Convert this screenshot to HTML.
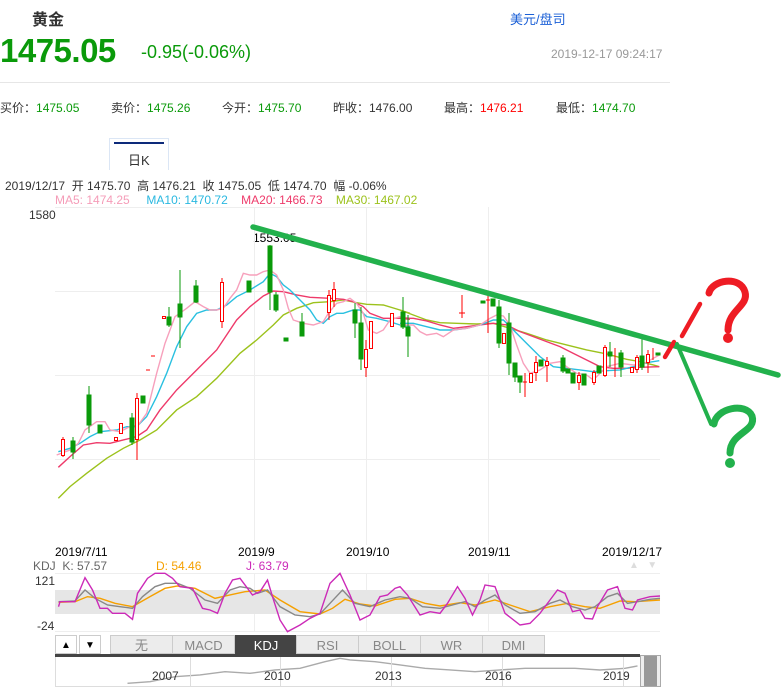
<!DOCTYPE html>
<html><head><meta charset="utf-8"><style>
body{margin:0;width:782px;height:689px;background:#fff;font-family:"Liberation Sans","Noto Sans CJK SC",sans-serif;position:relative;overflow:hidden}
.a{position:absolute;white-space:nowrap}
.g{color:#0a9a0a}.r{color:#f00}
.tab{position:absolute;top:635px;height:19px;border:1px solid #ccc;background:#ececec;color:#888;font-size:13px;text-align:center;line-height:19px;box-sizing:border-box}
</style></head><body>
<div class="a" style="left:32px;top:6px;font-size:16px;font-weight:bold;color:#333">黄金</div>
<div class="a" style="left:510px;top:9px;font-size:13px;color:#1a5fd6">美元/盘司</div>
<div class="a g" style="left:0;top:32px;font-size:33px;font-weight:bold;letter-spacing:-0.5px">1475.05</div>
<div class="a g" style="left:141px;top:42px;font-size:18px">-0.95(-0.06%)</div>
<div class="a" style="left:551px;top:47px;font-size:12px;color:#999">2019-12-17 09:24:17</div>
<div class="a" style="left:0;top:82px;width:670px;height:1px;background:#e6e6e6"></div>
<div class="a" style="left:0;top:99px;font-size:12px;color:#333">买价：<span class="g">1475.05</span></div>
<div class="a" style="left:111px;top:99px;font-size:12px;color:#333">卖价：<span class="g">1475.26</span></div>
<div class="a" style="left:222px;top:99px;font-size:12px;color:#333">今开：<span class="g">1475.70</span></div>
<div class="a" style="left:333px;top:99px;font-size:12px;color:#333">昨收：1476.00</div>
<div class="a" style="left:444px;top:99px;font-size:12px;color:#333">最高：<span class="r">1476.21</span></div>
<div class="a" style="left:556px;top:99px;font-size:12px;color:#333">最低：<span class="g">1474.70</span></div>
<div class="a" style="left:109px;top:138px;width:60px;height:32px;border:1px solid #dbe6f5;border-bottom:none;box-sizing:border-box;background:#fff"></div>
<div class="a" style="left:114px;top:142px;width:50px;height:2px;background:#0d2a7a"></div>
<div class="a" style="left:128px;top:150px;font-size:13px;color:#333">日K</div>
<div class="a" style="left:5px;top:177px;font-size:12px;color:#333">2019/12/17&nbsp; 开 1475.70&nbsp; 高 1476.21&nbsp; 收 1475.05&nbsp; 低 1474.70&nbsp; 幅 -0.06%</div>
<div class="a" style="left:55px;top:193px;font-size:12px"><span style="color:#f59cb8">MA5: 1474.25</span>&nbsp;&nbsp;&nbsp;&nbsp; <span style="color:#2ab8e0">MA10: 1470.72</span>&nbsp;&nbsp;&nbsp; <span style="color:#ee3a6a">MA20: 1466.73</span>&nbsp;&nbsp;&nbsp; <span style="color:#9cc21c">MA30: 1467.02</span></div>
<div class="a" style="left:29px;top:208px;font-size:12px;color:#333">1580</div>
<div class="a" style="left:253px;top:231px;font-size:12px;color:#000">1553.05</div>
<div class="a" style="left:55px;top:545px;font-size:12px;color:#000">2019/7/11</div>
<div class="a" style="left:238px;top:545px;font-size:12px;color:#000">2019/9</div>
<div class="a" style="left:346px;top:545px;font-size:12px;color:#000">2019/10</div>
<div class="a" style="left:468px;top:545px;font-size:12px;color:#000">2019/11</div>
<div class="a" style="left:602px;top:545px;font-size:12px;color:#000">2019/12/17</div>
<div class="a" style="left:629px;top:560px;font-size:10px;color:#ddd">▲&nbsp;&nbsp;&nbsp;▼</div>
<div class="a" style="left:33px;top:559px;font-size:12px;color:#666">KDJ&nbsp; K: 57.57</div>
<div class="a" style="left:156px;top:559px;font-size:12px;color:#f5a000">D: 54.46</div>
<div class="a" style="left:246px;top:559px;font-size:12px;color:#cc2ab8">J: 63.79</div>
<div class="a" style="left:35px;top:574px;font-size:12px;color:#333">121</div>
<div class="a" style="left:37px;top:619px;font-size:12px;color:#333">-24</div>
<svg class="a" style="left:0;top:0" width="782" height="689">
<g stroke="#eee" stroke-width="1" fill="none">
<line x1="55" y1="207.5" x2="412" y2="207.5"/>
<line x1="55" y1="291.5" x2="660" y2="291.5"/>
<line x1="55" y1="375.5" x2="660" y2="375.5"/>
<line x1="55" y1="459.5" x2="660" y2="459.5"/>
<line x1="254.5" y1="207" x2="254.5" y2="545"/>
<line x1="366.5" y1="207" x2="366.5" y2="545"/>
<line x1="488.5" y1="207" x2="488.5" y2="545"/>
<line x1="55" y1="573.5" x2="660" y2="573.5"/>
<line x1="55" y1="631.5" x2="660" y2="631.5"/>
<line x1="254.5" y1="573" x2="254.5" y2="632"/>
<line x1="366.5" y1="573" x2="366.5" y2="632"/>
<line x1="488.5" y1="573" x2="488.5" y2="632"/>
</g>
<rect x="55" y="590" width="605" height="24" fill="#e6e6e6"/>
<g fill="none" stroke-width="1.4">
<g transform="translate(50,210) scale(0.3333)">
<polyline vector-effect="non-scaling-stroke" stroke="#9cc21c" points="25,865 60,830 110,790 170,745 220,715 270,690 320,660 380,600 440,560 500,505 570,430 620,390 670,345 700,315 740,295 790,278 840,275 880,270 920,278 950,283 1000,285 1050,300 1080,310"/>
<polyline vector-effect="non-scaling-stroke" stroke="#ee3a6a" points="25,772 60,740 100,705 140,698 180,700 220,690 260,680 290,660 330,600 380,540 440,480 500,420 560,330 600,290 640,258 670,243 700,245 740,255 780,262 840,265 880,268 910,275 940,290 960,310 1000,325 1050,325 1080,328"/>
<polyline vector-effect="non-scaling-stroke" stroke="#2ac0e0" points="25,725 60,715 90,700 120,680 150,665 200,660 230,650 260,650 290,620 320,560 350,490 380,410 410,350 440,310 470,300 500,300 530,285 560,260 600,240 640,215 660,190 680,200 700,225 720,240 750,270 780,300 800,330 820,340 840,320 860,310 880,310 910,300 930,300 950,320 980,325 1020,335 1050,345 1080,348"/>
<polyline vector-effect="non-scaling-stroke" stroke="#f7a0bc" points="20,735 60,720 85,700 105,660 140,635 165,635 180,660 210,665 240,650 265,645 290,610 320,490 345,400 375,320 410,295 435,275 460,290 480,300 500,300 520,295 540,265 560,240 580,190 600,195 620,195 640,185 660,180 680,195 700,240 715,295 730,330 760,340 790,345 820,335 835,310 860,280 880,275 900,265 920,280 940,310 955,360 980,370 1000,360 1020,330 1050,320 1080,325"/>
</g>
<g transform="translate(400,210) scale(0.3333)">
<polyline vector-effect="non-scaling-stroke" stroke="#9cc21c" points="0,300 40,315 80,330 120,338 170,340 230,342 280,340 330,355 380,370 440,390 500,405 560,420 620,432 680,448 720,455 760,465 778,470"/>
<polyline vector-effect="non-scaling-stroke" stroke="#ee3a6a" points="0,325 40,325 80,333 120,345 160,355 200,350 240,345 280,340 320,345 360,365 400,380 440,395 480,410 520,430 560,450 600,470 640,475 680,475 720,472 778,470"/>
<polyline vector-effect="non-scaling-stroke" stroke="#2ac0e0" points="0,340 40,340 80,350 120,360 160,360 200,355 240,345 280,330 310,330 340,360 380,400 420,440 460,470 500,475 540,480 580,485 620,482 660,480 700,470 740,458 778,452"/>
<polyline vector-effect="non-scaling-stroke" stroke="#f7a0bc" points="0,345 40,345 60,365 80,375 110,370 130,380 160,360 200,355 240,345 270,325 290,315 310,318 330,345 350,405 370,460 390,490 420,480 450,460 480,455 500,470 530,490 560,495 580,510 600,490 620,470 660,460 700,465 730,462 760,445 778,435"/>
</g>
</g>
<g stroke="#0a9a0a" fill="#0a9a0a" stroke-width="1">
<line x1="73" y1="437" x2="73" y2="459"/><rect x="71" y="441" width="4" height="11"/>
<line x1="89" y1="386" x2="89" y2="433"/><rect x="87" y="395" width="4" height="30"/>
<rect x="98" y="425" width="4" height="8"/>
<line x1="132" y1="413" x2="132" y2="445"/><rect x="130" y="418" width="4" height="24"/>
<rect x="141" y="396" width="4" height="7"/>
<line x1="169" y1="307" x2="169" y2="327"/><rect x="167" y="317" width="4" height="8"/>
<line x1="180" y1="270" x2="180" y2="348"/><rect x="178" y="304" width="4" height="13"/>
<line x1="196" y1="280" x2="196" y2="303"/><rect x="194" y="286" width="4" height="16"/>
<rect x="247" y="281" width="4" height="11"/>
<line x1="270" y1="245" x2="270" y2="310"/><rect x="268" y="246" width="4" height="46"/>
<line x1="276" y1="292" x2="276" y2="312"/><rect x="274" y="295" width="4" height="15"/>
<rect x="284" y="338" width="4" height="3"/>
<line x1="302" y1="313" x2="302" y2="336"/><rect x="300" y="322" width="4" height="14"/>
<line x1="355" y1="303" x2="355" y2="338"/><rect x="353" y="310" width="4" height="13"/>
<line x1="361" y1="307" x2="361" y2="370"/><rect x="359" y="323" width="4" height="36"/>
<line x1="403" y1="297" x2="403" y2="329"/><rect x="401" y="312" width="4" height="15"/>
<line x1="408" y1="315" x2="408" y2="357"/><rect x="406" y="327" width="4" height="9"/>
<rect x="481" y="301" width="4" height="2"/>
<rect x="491" y="299" width="4" height="7"/>
<line x1="499" y1="300" x2="499" y2="348"/><rect x="497" y="307" width="4" height="36"/>
<line x1="509" y1="313" x2="509" y2="375"/><rect x="507" y="323" width="4" height="40"/>
<line x1="515" y1="363" x2="515" y2="382"/><rect x="513" y="363" width="4" height="14"/>
<line x1="520" y1="376" x2="520" y2="393"/><rect x="518" y="376" width="4" height="6"/>
<rect x="539" y="360" width="4" height="6"/>
<line x1="563" y1="355" x2="563" y2="373"/><rect x="561" y="358" width="4" height="13"/>
<rect x="566" y="369" width="4" height="4"/>
<rect x="571" y="373" width="4" height="10"/>
<rect x="582" y="374" width="4" height="11"/>
<rect x="597" y="366" width="4" height="7"/>
<line x1="610" y1="342" x2="610" y2="367"/><rect x="608" y="352" width="4" height="4"/>
<line x1="621" y1="350" x2="621" y2="377"/><rect x="619" y="353" width="4" height="14"/>
<line x1="642" y1="338" x2="642" y2="370"/><rect x="640" y="356" width="4" height="11"/>
<rect x="656" y="353" width="4" height="2"/>
</g>
<g stroke="#f00" fill="#fff" stroke-width="1">
<line x1="63" y1="437" x2="63" y2="457"/><rect x="61.5" y="439.5" width="3" height="16"/>
<rect x="114.5" y="437.5" width="3" height="3"/>
<rect x="119.5" y="423.5" width="3" height="10"/>
<line x1="137" y1="393" x2="137" y2="460"/><rect x="135.5" y="398.5" width="3" height="41"/>
<line x1="146" y1="370" x2="150" y2="370"/><line x1="151" y1="356" x2="155" y2="356"/>
<rect x="162.5" y="316.5" width="3" height="2"/>
<line x1="222" y1="278" x2="222" y2="328"/><rect x="220.5" y="282.5" width="3" height="39"/>
<line x1="329" y1="290" x2="329" y2="320"/><rect x="327.5" y="295.5" width="3" height="17"/>
<line x1="334" y1="282" x2="334" y2="307"/><rect x="332.5" y="289.5" width="3" height="11"/>
<line x1="366" y1="340" x2="366" y2="377"/><rect x="364.5" y="349.5" width="3" height="18"/>
<rect x="369.5" y="321.5" width="3" height="27"/>
<rect x="390.5" y="313.5" width="3" height="13"/>
<line x1="462" y1="295" x2="462" y2="318"/><line x1="459" y1="313" x2="465" y2="313"/>
<line x1="488" y1="296" x2="488" y2="333"/><line x1="486" y1="300" x2="490" y2="300"/>
<rect x="502.5" y="333.5" width="3" height="10"/>
<line x1="525" y1="373" x2="525" y2="397"/><line x1="523" y1="382" x2="527" y2="382"/>
<rect x="529.5" y="373.5" width="3" height="9"/>
<line x1="536" y1="356" x2="536" y2="381"/><rect x="534.5" y="362.5" width="3" height="10"/>
<line x1="547" y1="357" x2="547" y2="382"/><rect x="545.5" y="361.5" width="3" height="4"/>
<line x1="579" y1="372" x2="579" y2="390"/><rect x="577.5" y="375.5" width="3" height="7"/>
<line x1="594" y1="370" x2="594" y2="385"/><rect x="592.5" y="372.5" width="3" height="10"/>
<line x1="605" y1="345" x2="605" y2="377"/><rect x="603.5" y="347.5" width="3" height="28"/>
<line x1="615" y1="348" x2="615" y2="377"/>
<rect x="630.5" y="367.5" width="3" height="5"/>
<line x1="637" y1="355" x2="637" y2="373"/><rect x="635.5" y="357.5" width="3" height="12"/>
<line x1="648" y1="350" x2="648" y2="373"/><rect x="646.5" y="354.5" width="3" height="8"/>
<line x1="653" y1="348" x2="653" y2="360"/>
</g>
<line x1="253" y1="227" x2="778" y2="375" stroke="#22b14c" stroke-width="5.5" stroke-linecap="round"/>
<g stroke="#ee1c24" stroke-width="4.5" stroke-linecap="round" fill="none">
<line x1="665" y1="357" x2="674" y2="342"/><line x1="682" y1="336" x2="700" y2="304"/>
</g>
<path d="M709,293 C712,280 740,275 745,292 C749,306 728,310 728,330" stroke="#ee1c24" stroke-width="7" stroke-linecap="round" fill="none"/>
<circle cx="728" cy="338" r="5" fill="#ee1c24"/>
<line x1="677" y1="344" x2="711" y2="424" stroke="#22b14c" stroke-width="4" stroke-linecap="round"/>
<path d="M714,424 C716,408 746,402 752,416 C757,432 730,432 730,453" stroke="#22b14c" stroke-width="7" stroke-linecap="round" fill="none"/>
<circle cx="730" cy="463" r="5" fill="#22b14c"/>
<g fill="none" stroke-width="1.4" transform="translate(0,540) scale(0.5,0.3333)">
<polyline vector-effect="non-scaling-stroke" stroke="#f5a000" points="117,187 150,185 175,170 200,175 230,190 265,200 300,170 330,145 355,138 390,145 430,175 460,165 490,155 530,150 560,180 600,215 640,222 665,205 690,178 720,192 750,198 790,178 820,175 850,190 880,198 920,188 950,195 990,180 1020,195 1060,215 1100,200 1135,190 1170,200 1200,205 1240,183 1270,185 1320,180"/>
<polyline vector-effect="non-scaling-stroke" stroke="#888" points="117,185 150,183 170,150 190,175 215,195 240,200 265,205 285,170 310,140 330,130 355,130 380,145 410,180 435,190 460,150 480,140 500,145 515,160 535,150 560,200 590,225 620,230 640,222 660,190 685,150 710,190 740,200 770,180 800,170 820,175 845,200 880,205 905,195 930,185 950,200 970,180 990,165 1010,195 1040,220 1070,215 1100,190 1120,180 1145,200 1170,210 1190,200 1215,170 1235,160 1255,190 1275,185 1300,178 1320,175"/>
<polyline vector-effect="non-scaling-stroke" stroke="#cc2ab8" points="117,200 120,185 150,185 170,113 185,150 200,205 215,205 225,220 250,220 265,238 275,160 295,115 310,100 330,100 345,115 360,140 385,145 405,205 420,210 435,220 450,160 465,120 480,115 495,145 505,165 520,155 535,120 545,170 560,240 575,275 600,255 620,235 640,220 660,130 680,100 700,165 720,240 740,225 760,170 775,165 790,145 800,140 815,165 840,225 860,215 880,220 895,190 915,140 930,175 945,225 960,180 970,135 990,140 1010,220 1040,255 1060,250 1080,220 1100,180 1115,150 1130,160 1145,215 1160,210 1170,235 1185,237 1195,200 1215,150 1235,140 1250,205 1265,210 1275,180 1300,170 1320,168"/>
<polyline vector-effect="non-scaling-stroke" stroke="#aaa" points="255,430 300,425 350,410 400,405 450,395 500,400 550,390 600,385 650,365 680,355 700,360 750,365 800,375 850,385 900,390 950,395 1000,390 1050,385 1100,385 1150,385 1200,390 1250,385 1275,378"/>
</g>
<rect x="55" y="654" width="585" height="3" fill="#444"/>
<line x1="55.5" y1="657" x2="55.5" y2="686" stroke="#ddd"/>
<line x1="55" y1="686.5" x2="660" y2="686.5" stroke="#ddd"/>
<g stroke="#ddd"><line x1="190.5" y1="657" x2="190.5" y2="686"/><line x1="280.5" y1="657" x2="280.5" y2="686"/><line x1="391.5" y1="657" x2="391.5" y2="686"/><line x1="502.5" y1="657" x2="502.5" y2="686"/><line x1="623.5" y1="657" x2="623.5" y2="686"/></g>
<rect x="640.5" y="655.5" width="20" height="31" fill="#eee" stroke="#aaa"/>
<rect x="644" y="656" width="13" height="30" fill="#999"/>
</svg>
<div class="a" style="left:152px;top:669px;font-size:12px;color:#333">2007</div>
<div class="a" style="left:264px;top:669px;font-size:12px;color:#333">2010</div>
<div class="a" style="left:375px;top:669px;font-size:12px;color:#333">2013</div>
<div class="a" style="left:485px;top:669px;font-size:12px;color:#333">2016</div>
<div class="a" style="left:603px;top:669px;font-size:12px;color:#333">2019</div>
<div class="tab" style="left:55px;width:22px;background:#fff;color:#000;font-size:10px">▲</div>
<div class="tab" style="left:79px;width:22px;background:#fff;color:#000;font-size:10px">▼</div>
<div class="tab" style="left:110px;width:63px">无</div>
<div class="tab" style="left:172px;width:63px">MACD</div>
<div class="tab" style="left:235px;width:62px;background:#444;color:#fff;border-color:#444">KDJ</div>
<div class="tab" style="left:296px;width:63px">RSI</div>
<div class="tab" style="left:358px;width:63px">BOLL</div>
<div class="tab" style="left:420px;width:63px">WR</div>
<div class="tab" style="left:482px;width:63px">DMI</div>
</body></html>
